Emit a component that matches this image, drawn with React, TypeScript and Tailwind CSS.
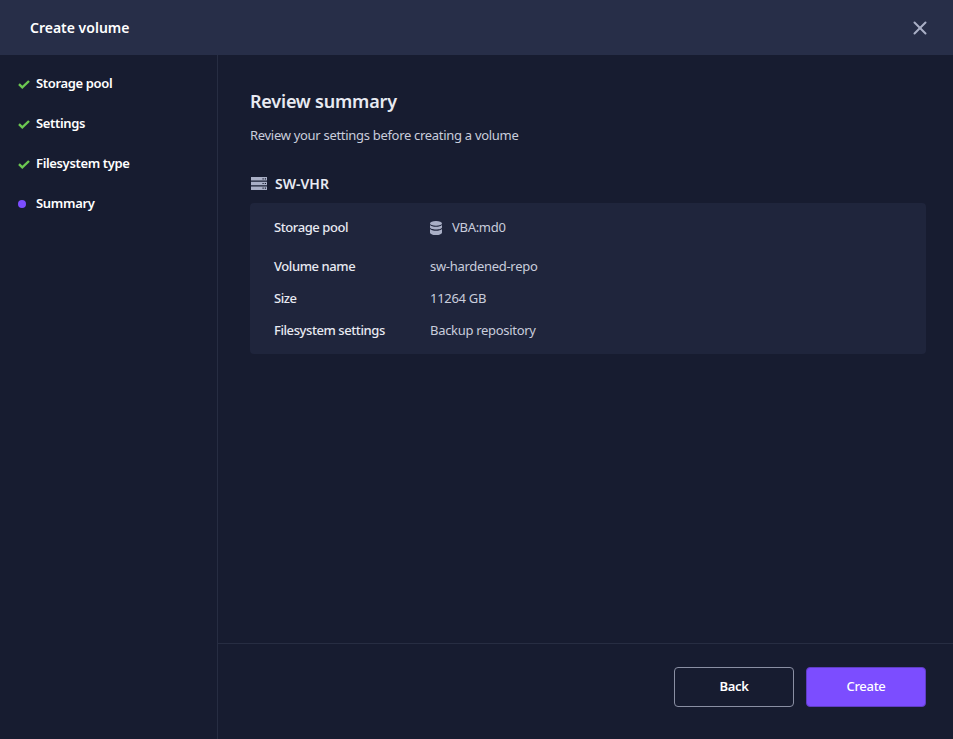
import { X } from "lucide-react";

const steps = ["Storage pool", "Settings", "Filesystem type"];

function CheckMark() {
  return (
    <svg viewBox="0 0 12 9" className="w-3 h-[9px] shrink-0" fill="none" stroke="#6cc751" strokeWidth={2.4}>
      <polyline points="1,4.2 4.3,7.3 11,1" />
    </svg>
  );
}

function ServerIcon() {
  return (
    <svg viewBox="0 0 16 13" className="w-4 h-[13px] -mt-px" fill="#a9afc6">
      <path fillRule="evenodd" d="M0 0h16v3.600H0zM11.500 1.200h1.200v1.200h-1.200zM13.800 1.200h1.200v1.200h-1.200z" />
      <path fillRule="evenodd" d="M0 4.700h16v3.600H0zM11.500 5.900h1.200v1.200h-1.200zM13.800 5.900h1.200v1.200h-1.200z" />
      <path fillRule="evenodd" d="M0 9.400h16V13H0zM11.500 10.600h1.200v1.200h-1.200zM13.800 10.600h1.200v1.200h-1.200z" />
    </svg>
  );
}

function DbIcon() {
  return (
    <svg viewBox="0 0 12 14" className="w-3 h-[14px]" fill="#a9afc6">
      <ellipse cx="6" cy="2.400" rx="6" ry="2.400" />
      <path d="M0 4v2.200c0 1.300 2.700 2.300 6 2.300s6-1 6-2.300V4c-1 1.200-3.300 1.800-6 1.800S1 5.200 0 4z" />
      <path d="M0 8v3.400C0 12.900 2.700 14 6 14s6-1.100 6-2.600V8c-1 1.200-3.300 1.800-6 1.800S1 9.200 0 8z" />
    </svg>
  );
}

export default function App() {
  return (
    <div className="w-[953px] h-[739px] flex flex-col bg-[#171c30] overflow-hidden font-['Noto_Sans',sans-serif] text-[13px] tracking-[-0.3px]">
      {/* Header */}
      <div className="h-[55px] shrink-0 bg-[#272e48] flex items-center justify-between pl-[30px] pr-[22px]">
        <span className="text-sm font-semibold text-white tracking-normal">Create volume</span>
        <X className="w-[22px] h-[22px] text-[#a9afc6]" strokeWidth={2.2} />
      </div>

      <div className="flex flex-1 min-h-0">
        {/* Steps */}
        <div className="w-[218px] shrink-0 border-r border-[#272d42] pt-[9px] pl-[18px]">
          {steps.map((s) => (
            <div key={s} className="h-10 flex items-center gap-[6px] font-semibold text-white">
              <CheckMark />
              <span className="tracking-[-0.35px]">{s}</span>
            </div>
          ))}
          <div className="h-10 flex items-center gap-[10px] font-semibold text-white">
            <span className="w-2 h-2 rounded-full bg-[#7c4dff]" />
            <span>Summary</span>
          </div>
        </div>

        {/* Main */}
        <div className="flex-1 flex flex-col min-w-0">
          <div className="flex-1 pl-8 pr-[27px] pt-[34px]">
            <h2 className="text-lg leading-6 font-semibold text-[#e8eaf2] tracking-[-0.2px]">Review summary</h2>
            <p className="mt-[13px] leading-[18px] text-[#c9cddc]">Review your settings before creating a volume</p>
            <div className="mt-[30px] ml-px flex items-center gap-2 h-5">
              <ServerIcon />
              <span className="text-sm font-semibold text-[#e8eaf2] tracking-normal">SW-VHR</span>
            </div>
            <div className="mt-[9px] h-[151px] rounded bg-[#1f253c] px-6 pt-[14px]">
              <div className="flex items-center h-[22px]">
                <span className="w-[156px] font-medium text-[#e8eaf2] tracking-[-0.42px]">Storage pool</span>
                <span className="flex items-center gap-[10px] text-[#c9cddc]"><DbIcon />VBA:md0</span>
              </div>
              <div className="mt-[17px] flex items-center h-[22px]">
                <span className="w-[156px] font-medium text-[#e8eaf2] tracking-[-0.42px]">Volume name</span>
                <span className="text-[#c9cddc]">sw-hardened-repo</span>
              </div>
              <div className="mt-[10px] flex items-center h-[22px]">
                <span className="w-[156px] font-medium text-[#e8eaf2] tracking-[-0.42px]">Size</span>
                <span className="text-[#c9cddc]">11264 GB</span>
              </div>
              <div className="mt-[10px] flex items-center h-[22px]">
                <span className="w-[156px] font-medium text-[#e8eaf2] tracking-[-0.42px]">Filesystem settings</span>
                <span className="text-[#c9cddc]">Backup repository</span>
              </div>
            </div>
          </div>

          {/* Footer */}
          <div className="h-[96px] shrink-0 border-t border-[#272d42] flex items-start justify-end gap-3 pt-[23px] pr-[27px]">
            <button className="w-[120px] h-10 rounded border border-[#8a8fa3] font-semibold text-white">Back</button>
            <button className="w-[120px] h-10 rounded border border-[#5f3dc4] bg-[#7c4dff] font-medium text-white">Create</button>
          </div>
        </div>
      </div>
    </div>
  );
}
